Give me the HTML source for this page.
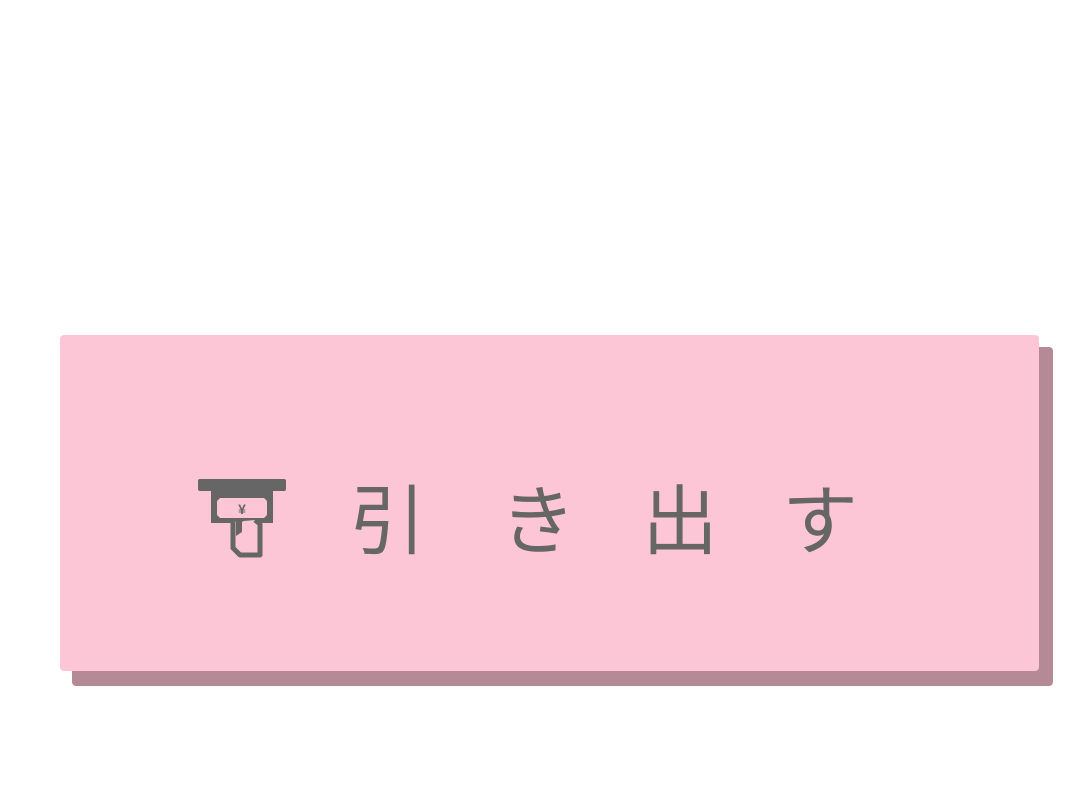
<!DOCTYPE html>
<html><head><meta charset="utf-8"><style>
html,body{margin:0;padding:0;background:#fff;width:1080px;height:810px;overflow:hidden}
.sh{position:absolute;left:72px;top:347px;width:981px;height:339px;background:#b48a96;border-radius:4px}
.card{position:absolute;left:60px;top:335px;width:979px;height:336px;background:#fdc6d7;border-radius:4px}
.t{position:absolute;top:475px;left:350px;font-family:"Liberation Sans","Noto Sans CJK JP",sans-serif;font-size:76px;color:#666;line-height:96px;white-space:nowrap}
.t span{position:absolute;top:0}
</style></head><body>
<div class="sh"></div><div class="card"></div>
<svg style="position:absolute;left:190px;top:470px" width="110" height="100" viewBox="0 0 110 100">
<rect x="8" y="9" width="88" height="12" rx="2" fill="#666"/>
<rect x="21" y="21" width="62" height="32" fill="#666"/>
<path d="M30 28h44l3 3v14l-3 3h-44l-3-3v-14z" fill="#fdc6d7"/>
<text x="52" y="44" font-family="Liberation Sans,sans-serif" font-size="14" font-weight="bold" fill="#666" text-anchor="middle">¥</text>
<path d="M43 52v26l7 7h20v-31l-5-4" fill="#fdc6d7" stroke="#666" stroke-width="5" stroke-linejoin="round"/>
<path d="M46 48h12l-6 4v10l-6 4z" fill="#666"/>
</svg>
<div class="t"><span style="left:0">引</span><span style="left:150px">き</span><span style="left:292px">出</span><span style="left:432px">す</span></div>
</body></html>
